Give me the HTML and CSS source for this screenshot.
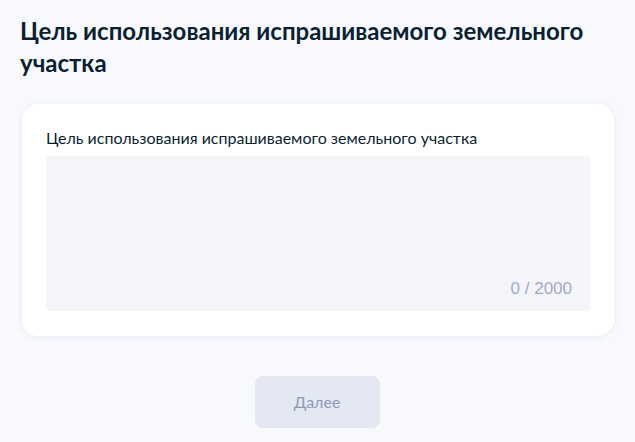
FILE: index.html
```html
<!DOCTYPE html>
<html lang="ru">
<head>
    <meta charset="UTF-8">
    <meta name="viewport" content="width=device-width, initial-scale=1.0">
    <title>Цель использования</title>
    <link rel="stylesheet" href="styles.css">
</head>
<body>
    <div class="page">
        <h1>Цель использования испрашиваемого земельного участка</h1>
        <div class="card">
            <label for="purpose">Цель использования испрашиваемого земельного участка</label>
            <div class="field">
                <textarea id="purpose" maxlength="2000"></textarea>
                <span class="counter">0 / 2000</span>
            </div>
        </div>
        <div class="actions">
            <button type="button" disabled>Далее</button>
        </div>
    </div>
</body>
</html>
```

FILE: styles.css
```css
body {
    margin: 0;
    background: #f8f9fd;
    font-family: Lato, "Noto Sans", sans-serif;
    color: #0b1f33;
}
.page {
    padding: 15px 21px 0 20px;
}
h1 {
    margin: 0 0 25px;
    font-size: 24px;
    line-height: 32px;
    font-weight: 700;
    width: 580px;
}
.card {
    margin-left: 2px;
    background: white;
    border-radius: 16px;
    box-shadow: 0 1px 6px rgba(30, 70, 160, 0.08);
    padding: 24px 24px 25px;
}
label {
    display: block;
    font-size: 16px;
    line-height: 20px;
    margin-bottom: 8px;
}
.field {
    position: relative;
}
textarea {
    display: block;
    width: 100%;
    height: 155px;
    box-sizing: border-box;
    border: none;
    border-radius: 4px;
    background: #f4f5f9;
    resize: none;
    font-family: inherit;
}
.counter {
    position: absolute;
    right: 18px;
    bottom: 12px;
    font-family: "Liberation Sans", Arial, sans-serif;
    font-size: 17px;
    color: #9daad0;
}
.actions {
    display: flex;
    justify-content: center;
    margin-top: 40px;
}
button {
    width: 125px;
    height: 52px;
    border: none;
    border-radius: 8px;
    background: #e4e8f2;
    color: #8f9bb8;
    font-family: inherit;
    font-size: 16px;
    padding-bottom: 2px;
}
```
